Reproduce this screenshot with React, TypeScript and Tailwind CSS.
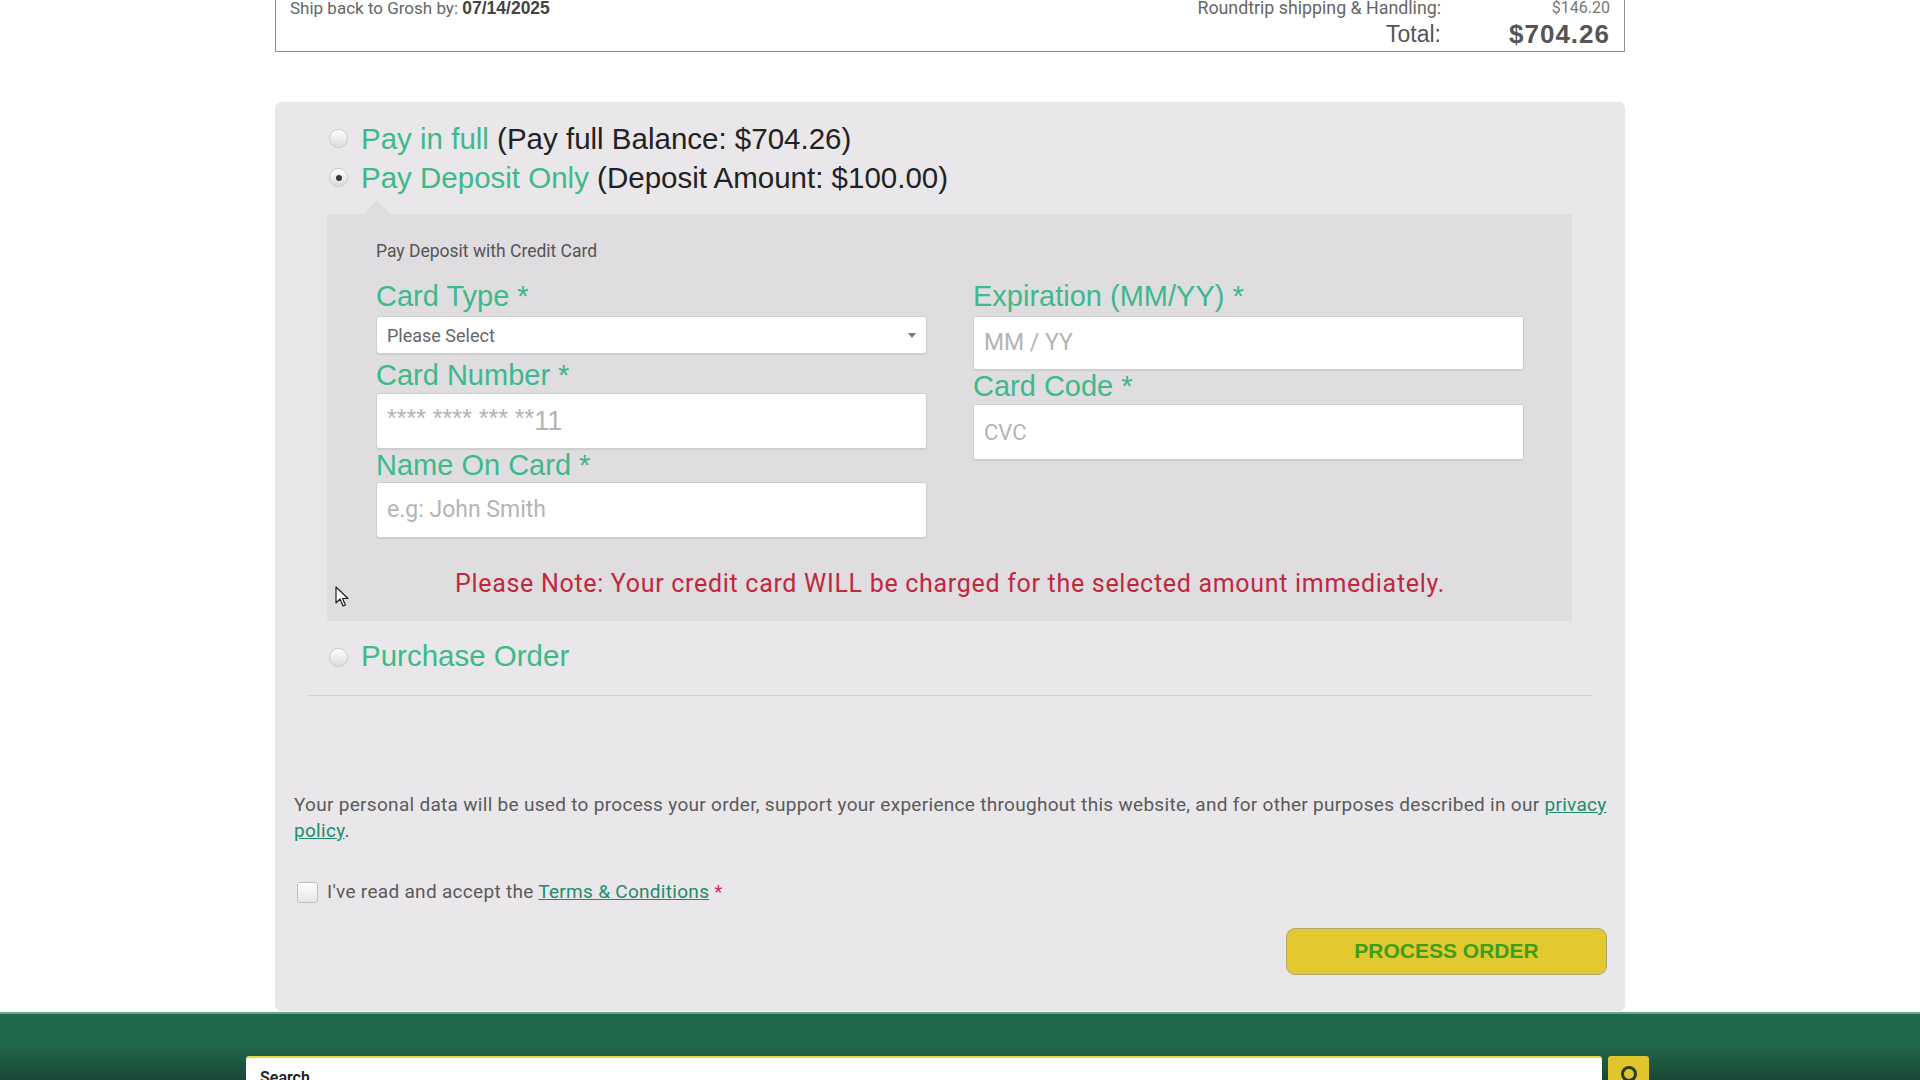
import React from 'react'

const fira = { fontFamily: 'Roboto, "Open Sans", sans-serif' }
const arial = { fontFamily: '"Liberation Sans", Arial, sans-serif' }

// Radio button look-alike
const Radio = ({ checked = false }: { checked?: boolean }) => (
  <span className="flex h-[19px] w-[19px] shrink-0 items-center justify-center rounded-full border border-[#c9c9c9] bg-gradient-to-b from-white to-[#dcdcdc] shadow-[inset_0_1px_1px_rgba(255,255,255,0.9)]">
    {checked && <span className="h-[6px] w-[6px] rounded-full bg-[#3a3a3a]" />}
  </span>
)

const FieldLabel = ({ children }: { children: React.ReactNode }) => (
  <div className="h-[32px] text-[29px] leading-[32px] text-[#3db98b]" style={arial}>
    {children}
  </div>
)

const inputBox =
  'rounded-[3px] border border-[#cfcfcf] bg-white shadow-[0_1px_1px_rgba(0,0,0,0.08)] flex items-center pl-[10px]'

export default function App() {
  return (
    <div className="relative min-h-screen overflow-hidden bg-white">
      {/* Order summary box (scrolled, top cut off) */}
      <div className="ml-[275px] mt-[-4px] h-[56px] w-[1350px] border-x border-b border-[#8e8e8e] pl-[14px] pr-[14px]">
        <div className="flex justify-between">
          <div className="h-[24px] text-[17px] leading-[24px] text-[#666]" style={fira}>
            Ship back to Grosh by:{' '}
            <span className="text-[17.5px] font-bold text-[#444]" style={arial}>
              07/14/2025
            </span>
          </div>
          <div className="grid grid-cols-[auto_169px] items-center">
            <div className="h-[24px] text-right text-[17.8px] leading-[24px] text-[#666]" style={fira}>
              Roundtrip shipping &amp; Handling:
            </div>
            <div className="h-[24px] text-right text-[16px] leading-[24px] text-[#777]" style={fira}>
              $146.20
            </div>
            <div className="h-[28px] text-right text-[23px] leading-[28px] text-[#555]" style={arial}>
              Total:
            </div>
            <div className="h-[28px] text-right text-[26px] font-bold leading-[28px] tracking-[1px] text-[#555]" style={arial}>
              $704.26
            </div>
          </div>
        </div>
      </div>

      {/* Payment panel */}
      <div className="ml-[275px] mt-[50px] w-[1350px] rounded-[6px] bg-[#e9e7ea] pb-[36px] pt-[17px]">
        <div className="flex h-[39px] items-center gap-[13px] pl-[54px]">
          <Radio />
          <span className="text-[29.5px] leading-[39px]" style={arial}>
            <span className="text-[#3db98b]">Pay in full</span>{' '}
            <span className="text-[#222]">(Pay full Balance: $704.26)</span>
          </span>
        </div>
        <div className="flex h-[39px] items-center gap-[13px] pl-[54px]">
          <Radio checked />
          <span className="text-[29.5px] leading-[39px]" style={arial}>
            <span className="text-[#3db98b]">Pay Deposit Only</span>{' '}
            <span className="text-[#222]">(Deposit Amount: $100.00)</span>
          </span>
        </div>

        {/* Credit card box */}
        <div className="relative ml-[52px] mr-[53px] mt-[17px] bg-[#dfdde0] pb-[22px] pl-[49px] pr-[48px] pt-[27px]">
          <span className="absolute left-[37px] top-[-14px] h-0 w-0 border-x-[13px] border-b-[14px] border-x-transparent border-b-[#dfdde0]" />
          <div className="h-[20px] text-[17.5px] leading-[20px] text-[#555]" style={fira}>
            Pay Deposit with Credit Card
          </div>

          <div className="mt-[19px] grid grid-cols-2 gap-x-[46px]">
            <div>
              <FieldLabel>Card Type *</FieldLabel>
              <div className={`${inputBox} mt-[4px] h-[38px] justify-between pr-[10px]`}>
                <span className="text-[18px] text-[#666]" style={fira}>
                  Please Select
                </span>
                <span className="h-0 w-0 border-x-[4px] border-t-[5px] border-x-transparent border-t-[#777]" />
              </div>
              <div className="mt-[5px]">
                <FieldLabel>Card Number *</FieldLabel>
              </div>
              <div className={`${inputBox} mt-[2px] h-[56px]`}>
                <span className="text-[#b4b4b4]" style={arial}>
                  <span className="relative top-[-3px] text-[25px]">**** **** *** **</span>
                  <span className="text-[27px]">11</span>
                </span>
              </div>
              <FieldLabel>Name On Card *</FieldLabel>
              <div className={`${inputBox} mt-[1px] h-[56px]`}>
                <span className="text-[23px] text-[#b4b4b4]" style={fira}>
                  e.g: John Smith
                </span>
              </div>
            </div>
            <div>
              <FieldLabel>Expiration (MM/YY) *</FieldLabel>
              <div className={`${inputBox} mt-[4px] h-[54px]`}>
                <span className="text-[23px] text-[#b4b4b4]" style={fira}>
                  MM / YY
                </span>
              </div>
              <FieldLabel>Card Code *</FieldLabel>
              <div className={`${inputBox} mt-[2px] h-[56px]`}>
                <span className="text-[22px] text-[#b4b4b4]" style={fira}>
                  CVC
                </span>
              </div>
            </div>
          </div>

          <div className="mt-[31px] h-[30px] text-center text-[25px] leading-[30px] tracking-[0.7px] text-[#c0283e]" style={fira}>
            Please Note: Your credit card WILL be charged for the selected amount immediately.
          </div>

          {/* mouse pointer */}
          <svg className="absolute left-[8px] top-[372px]" width="14" height="22" viewBox="0 0 14 22">
            <path d="M1 1 L1 17 L5 13 L8 20 L10.5 19 L7.5 12.5 L13 12.5 Z" fill="white" stroke="#222" strokeWidth="1.2" strokeLinejoin="round" />
          </svg>
        </div>

        <div className="mt-[15px] flex h-[39px] items-center gap-[13px] pl-[54px]">
          <span className="mt-[4px]">
            <Radio />
          </span>
          <span className="text-[29.5px] leading-[39px] text-[#3db98b]" style={arial}>
            Purchase Order
          </span>
        </div>

        <div className="mx-[33px] mt-[20px] h-[1px] bg-[#d3d1d4]" />

        <p className="mt-[96px] pl-[19px] pr-[4px] text-[19px] leading-[25.5px] tracking-[0.3px] text-[#5a5a5a]" style={fira}>
          <span className="whitespace-nowrap">
            Your personal data will be used to process your order, support your experience throughout this website, and for other purposes described in our{' '}
            <span className="text-[#1f8c6b] underline">privacy</span>
          </span>
          <br />
          <span className="text-[#1f8c6b] underline">policy</span>.
        </p>

        <div className="mt-[35px] flex items-center gap-[9px] pl-[22px]">
          <span className="h-[21px] w-[21px] rounded-[3px] border border-[#bdbdbd] bg-gradient-to-b from-white to-[#e6e6e6]" />
          <span className="text-[19px] tracking-[0.3px] text-[#5a5a5a]" style={fira}>
            I've read and accept the <span className="text-[#1f8c6b] underline">Terms &amp; Conditions</span>{' '}
            <span className="text-[#e0245e]">*</span>
          </span>
        </div>

        <div className="mt-[21px] flex justify-end pr-[18px]">
          <button
            className="h-[47px] w-[321px] rounded-[9px] border border-[#b3a76a] bg-[#e3c92f] text-[21px] font-bold text-[#3c9e1c]"
            style={arial}
          >
            PROCESS ORDER
          </button>
        </div>
      </div>

      {/* Footer */}
      <div className="mt-[1px] h-[80px] border-t-2 border-[#6aa58d] bg-gradient-to-b from-[#1f674b] from-[40%] to-[#163f30]">
        <div className="mt-[42px] flex gap-[6px] pl-[246px]">
          <div className="h-[30px] w-[1356px] rounded-t-[3px] border-t-2 border-[#e8d84a] bg-white pl-[14px] pt-[8px] text-[16px] font-semibold text-[#222]" style={fira}>
            Search
          </div>
          <div className="flex h-[30px] w-[41px] justify-center rounded-t-[3px] bg-[#e0c52c] pt-[8px]">
            <svg width="20" height="20" viewBox="0 0 20 20">
              <circle cx="10" cy="10" r="6.5" fill="none" stroke="#2d3b2a" strokeWidth="3" />
            </svg>
          </div>
        </div>
      </div>
    </div>
  )
}
